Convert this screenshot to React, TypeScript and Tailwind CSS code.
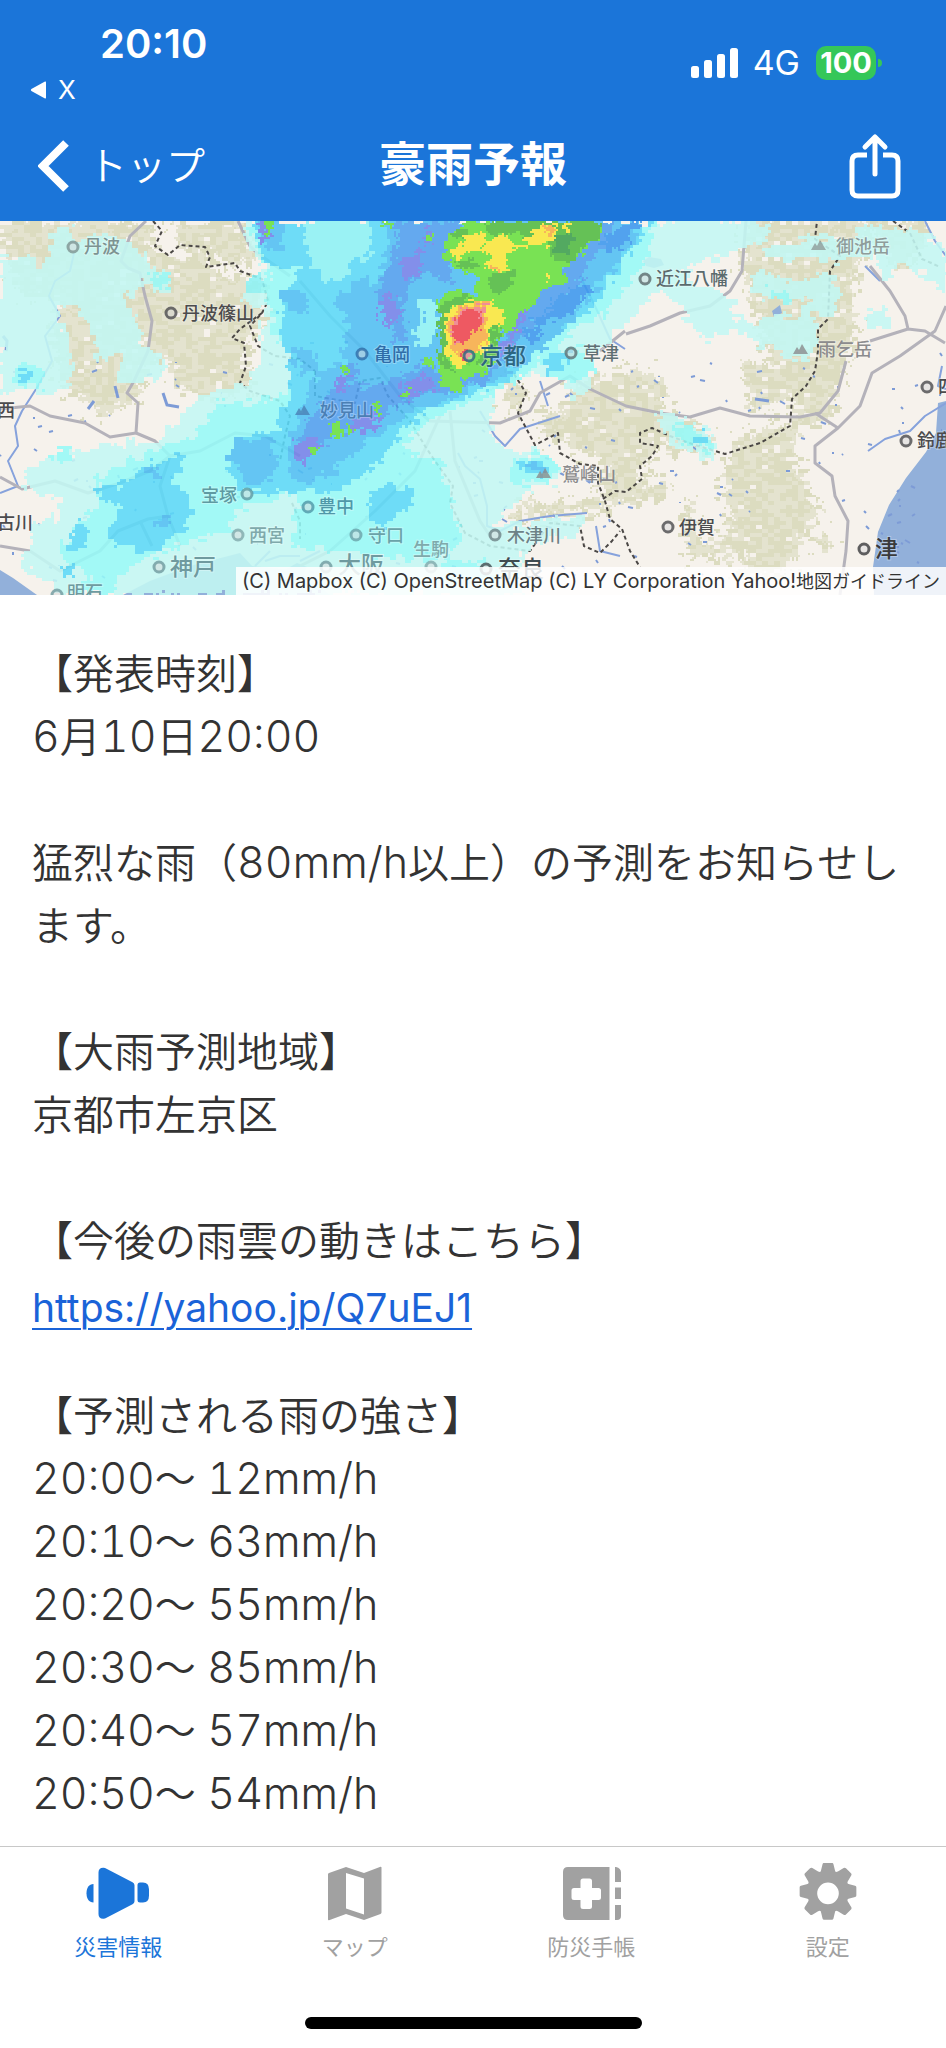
import type { ReactNode } from 'react'

type Point = [number, number]
type Layer = { color: string; shapes: string[] }

const MAP_W = 946
const MAP_H = 374

const forecast = [
  { time: '20:00', amount: '12mm/h' },
  { time: '20:10', amount: '63mm/h' },
  { time: '20:20', amount: '55mm/h' },
  { time: '20:30', amount: '85mm/h' },
  { time: '20:40', amount: '57mm/h' },
  { time: '20:50', amount: '54mm/h' },
]

// Outlines are "x,y x,y ..." in map coordinates
const forest: string[] = [
  '0,0 140,0 155,10 150,25 175,40 205,28 215,50 262,62 265,100 245,120 250,165 215,178 170,165 175,135 150,140 140,175 100,195 60,160 50,110 60,80 20,70 0,30',
  '170,0 240,0 262,38 235,50 210,30 180,28',
  '745,0 870,0 856,60 856,110 840,160 830,200 800,205 790,170 770,140 755,100 745,60',
  '870,0 925,0 930,25 895,50 880,20',
  '626,150 660,150 665,185 715,215 700,235 655,225 640,260 626,275 600,270',
  '570,165 600,155 626,150 640,200 626,240 600,240 570,225 545,215 540,195 565,190',
  '505,300 525,280 560,285 600,275 640,262 680,262 660,276 600,290 550,297',
  '505,150 520,160 530,175 515,190 500,180',
  '735,220 800,195 795,240 820,290 785,350 740,360 745,330 720,345 730,300 722,255',
  '682,285 690,280 700,320 720,310 715,335 690,335',
  '740,140 790,150 785,185 750,190',
  '820,310 832,318 828,332 818,325',
]

const rain: Layer[] = [
  {
    color: '#c4f8f4',
    shapes: [
      '0,37 30,35 45,50 50,20 65,8 70,2 75,20 120,15 145,30 150,45 175,60 165,70 140,60 135,75 120,70 135,95 140,120 165,140 155,160 120,165 115,150 125,135 100,140 90,110 75,85 60,90 65,110 70,130 75,160 50,175 25,170 0,175',
      '240,0 250,25 262,45 265,60 240,75 255,85 270,85 260,105 260,135 245,165 200,172 175,200 160,220 120,222 50,235 25,250 22,265 45,275 60,280 55,300 35,305 30,330 20,345 50,360 60,374 520,374 523,330 540,318 577,314 587,294 545,300 490,307 507,294 523,272 560,260 557,234 510,227 490,215 490,190 497,174 507,157 560,150 575,180 590,160 580,140 607,121 630,97 700,42 765,20 765,0',
      '660,30 690,60 725,75 735,85 730,95 765,105 755,115 710,108 715,120 705,120 690,105 680,80 650,66',
      '765,30 800,18 850,15 870,5 900,5 930,15 946,25 946,68 925,55 900,40 885,60 870,35 850,40 800,40 765,35',
      '745,55 765,50 790,60 830,50 840,70 830,95 815,90 812,100 820,120 812,135 795,142 770,125 755,125 755,105 770,95 800,95 810,75 790,80 760,75',
      '655,190 680,195 715,215 717,240 708,243 700,230 670,222',
      '868,90 885,85 888,105 870,112',
    ],
  },
  {
    color: '#97faf8',
    shapes: [
      '245,0 262,38 272,55 262,70 275,90 268,115 300,135 290,170 250,182 215,182 195,215 150,232 100,255 95,285 75,305 60,330 70,350 90,345 80,374 110,374 130,345 180,325 230,310 240,290 300,270 310,300 400,290 440,260 430,240 400,225 415,210 440,195 470,180 510,165 540,140 570,115 600,95 625,70 640,50 650,30 655,0',
      '10,145 30,140 45,150 42,166 15,162',
      '145,50 170,55 168,66 150,60',
      '48,232 72,228 70,240 55,243',
      '515,234 555,234 560,250 545,264 512,260',
      '300,262 440,240 450,268 462,318 430,340 385,335 330,330 290,325',
      '770,65 790,70 785,80 770,78',
      '535,130 580,128 595,150 575,160 550,152',
      '670,205 690,205 712,220 714,238 700,225 675,220',
      '440,335 480,340 500,360 450,362',
    ],
  },
  {
    color: '#5cdaf9',
    shapes: [
      '155,240 185,230 180,250 175,265 195,285 193,300 175,315 165,325 140,330 110,325 115,300 122,290 95,270 100,262 120,265 140,248',
      '250,0 258,25 268,45 300,45 285,75 280,110 290,140 290,180 275,195 285,212 240,215 225,240 235,265 270,275 300,268 340,270 360,255 385,235 400,210 430,190 470,175 510,160 530,135 560,110 590,90 610,60 630,30 655,0',
      '545,135 570,132 565,148 545,150',
      '520,240 545,240 548,256 525,256',
      '695,212 710,215 708,226 692,222',
      '80,300 90,310 84,326 70,330 68,315',
      '18,150 34,150 30,160 18,158',
      '370,268 385,262 412,270 410,285 395,292 388,308 372,300',
      '62,348 72,345 72,356 64,358',
    ],
  },
  {
    color: '#50bff4',
    shapes: [
      '258,0 285,0 285,20 278,32 262,20',
      '385,0 645,0 610,50 570,100 540,130 500,158 440,180 400,198 375,215 345,240 300,250 285,225 300,190 310,165 320,150 345,145 340,130 350,100 335,80 350,62 380,60 388,25',
      '280,66 300,70 312,85 295,92 282,80',
      '290,125 312,130 318,150 300,150',
      '236,220 270,218 277,235 270,258 250,265 240,250 225,240',
      '145,248 160,245 158,256 148,256',
      '155,300 172,298 165,310 154,306',
      '528,243 542,245 540,252 530,252',
      '285,220 320,240 340,250 310,262 290,255',
    ],
  },
  {
    color: '#8ef3f6',
    shapes: [
      '305,0 372,0 372,35 350,40 345,58 322,62 308,30',
      '420,75 438,82 440,108 425,125 412,118 422,100',
      '245,60 262,50 268,70 250,74',
    ],
  },
  {
    color: '#509ff0',
    shapes: [
      '395,0 460,0 445,40 455,50 445,65 430,50 410,62 400,90 408,118 396,122 388,100 378,72 395,30',
      '590,0 615,0 605,22 585,45 580,60 562,80 530,105 510,135 490,150 510,95 545,60 575,30',
      '335,165 375,165 400,155 430,140 440,158 500,145 485,162 440,170 395,186 345,210 310,228 292,226 300,212',
      '340,145 355,140 360,155 345,160',
    ],
  },
  {
    color: '#3c98ef',
    shapes: ['532,100 560,78 582,62 590,70 565,95 545,105', '525,108 545,104 530,122', '600,30 612,12 630,0 640,0 622,30'],
  },
  {
    color: '#7482ea',
    shapes: [
      '380,82 390,74 400,90 392,108 382,100',
      '402,38 425,30 420,52 405,60',
      '422,12 432,8 430,24 422,24',
      '332,158 350,150 348,168 336,170',
      '400,165 430,152 438,166 408,180',
      '350,200 382,190 374,210 352,210',
      '290,226 310,214 322,225 300,244',
      '515,88 528,84 520,112 502,136 496,128 508,112',
      '258,0 268,0 275,20 264,22',
    ],
  },
  {
    color: '#68e040',
    shapes: [
      '447,11 470,0 605,0 603,14 587,24 577,41 560,44 568,61 540,71 530,91 523,84 517,107 500,112 497,137 483,154 463,157 462,171 443,164 438,151 438,134 444,111 438,81 450,69 477,74 477,54 457,47 443,37',
      '264,0 272,0 276,10 270,14 265,8',
      '308,224 314,224 318,232 312,234',
      '330,204 340,198 342,216 332,218',
      '346,206 352,202 352,214 346,214',
      '374,184 382,182 380,192 376,192',
      '403,172 411,166 408,178 402,178',
      '426,138 434,136 432,146 426,146',
      '310,212 316,218 310,220',
      '426,10 434,14 432,20 426,16',
      '382,0 396,0 392,6 384,5',
      '340,144 350,148 344,152',
    ],
  },
  {
    color: '#52bb42',
    shapes: [
      '488,0 605,0 600,14 585,24 575,41 552,38 550,18 530,22 520,10 500,14 488,10',
      '440,84 462,74 480,76 460,84 446,92 446,140 455,150 442,146 438,120',
      '488,108 500,104 496,132 484,146 476,142 488,126',
      '447,12 465,5 470,12 455,18',
      '455,38 480,40 480,50 460,46',
      '490,54 515,48 512,64 500,72 488,66',
    ],
  },
  {
    color: '#3d9f4e',
    shapes: ['552,14 575,12 568,36 556,32'],
  },
  {
    color: '#fae73c',
    shapes: [
      '462,14 485,14 485,25 470,30 455,38 453,28 463,24',
      '488,18 506,14 520,26 508,34 508,48 490,52 485,46 492,36 480,32',
      '523,17 540,6 556,2 556,15 545,25 525,25',
      '562,2 571,2 570,10 564,12',
      '544,52 551,54 548,60',
      '446,92 465,82 490,80 503,88 502,102 488,105 487,130 470,132 460,147 455,146 444,130 446,110',
    ],
  },
  {
    color: '#f8ad48',
    shapes: [
      '450,97 465,84 487,82 485,102 486,120 476,130 460,134 450,126 449,110',
      '488,46 500,44 498,50 488,50',
      '545,6 554,4 552,14 546,14',
    ],
  },
  { color: '#f0808c', shapes: ['456,96 466,86 488,84 482,104 468,116 462,126 451,124 453,106'] },
  { color: '#ee4550', shapes: ['458,96 470,87 481,94 481,106 471,114 462,125 452,122 455,106', '463,130 470,128 472,136 462,138'] },
]

const roads = [
  'M146 0L130 15 121 40 128 47 140 52 145 75 152 100 148 130 134 160 127 172 138 182 136 212 110 216 85 202 50 195 30 185 0 188',
  'M136 212L155 220 170 235 200 230 235 212 265 215 300 235',
  'M0 256L22 268 55 260 88 272 120 262 150 250 170 235 160 265 168 295',
  'M168 295L148 298 118 310 100 330 60 350 30 330 0 325',
  'M140 300L152 325 M168 295L180 325',
  'M238 0L250 25 256 31 290 55',
  'M300 60L330 95 365 130 400 175 430 200 500 202 530 190 540 172 570 155 590 168 626 185 660 192 690 196 720 187 750 195 800 196 820 192 838 170 846 140',
  'M626 113L650 105 680 92 710 85 730 70 742 50 744 25 746 0',
  'M600 130L625 110 M450 190L455 240 480 300 490 315',
  'M440 195L415 250 375 290 330 330 300 345',
  'M870 45L890 70 905 95 908 108 870 120 M908 108L925 110 945 122 M946 85L935 110 900 135 872 152 860 185 838 207 815 225 815 242 832 255 835 275 848 300 846 330 840 374',
  'M815 192L838 207',
]

const rivers = [
  'M74 32L70 50 55 60 49 75 60 95 45 115 52 140 38 165 22 190 15 205 18 225 8 240 18 265 0 272',
  'M480 190L495 215 505 225 520 208 560 195',
  'M458 232L465 245 480 258 487 285 487 305 500 310 520 300 550 295 587 292',
  'M580 55L595 85 610 118 625 128',
  'M540 160L548 185',
  'M868 230L885 218 910 210 925 195 946 182',
  'M865 45L880 60 M925 0L935 20 946 35',
  'M265 340L280 335 300 335 M255 345L270 330 M300 340L320 330',
  'M596 305L600 330 620 335 M942 145L938 165 946 168',
]

const borders = [
  'M153 0L162 10 155 25 168 34 180 24 205 26 210 36 206 46 235 42 240 50 262 58 268 80 262 92 250 105 258 125 275 135 300 138 315 150',
  'M262 92L240 108 232 117 244 122 246 145 240 162 250 170 280 180 290 195 285 215 280 240',
  'M315 150L315 175 355 182 360 160 380 157 388 175 410 200 425 225 435 240 453 265 450 282 465 312 490 325 530 330 550 302 580 305 584 325 600 332 612 320 620 310',
  'M514 153L526 172 518 192 535 224 558 212 560 232 580 243 598 245 598 262 605 280 610 298 622 308 630 330 640 346',
  'M603 278L615 270 626 271 642 258 640 245 652 235 658 225 640 222 640 212 652 207 670 215 695 224 725 233 760 222 790 205 792 178 806 165 815 150 818 130 818 108 828 98 830 50 840 35 815 18 817 0',
  'M893 0L910 12 922 38 940 46',
  'M292 282L300 300 300 318',
]

type Place = {
  x: number
  y: number
  name: string
  size?: number
  tone?: string
  mark?: [number, number]
  peak?: [number, number]
}

const places: Place[] = [
  { x: 84, y: 32, name: '丹波', tone: '#7d9391', mark: [73, 26] },
  { x: 182, y: 99, name: '丹波篠山', tone: '#4b4b4d', mark: [171, 92] },
  { x: -3, y: 196, name: '西', tone: '#4b4b4d' },
  { x: -3, y: 308, name: '古川', tone: '#4b4b4d' },
  { x: 201, y: 281, name: '宝塚', tone: '#5e9aa2', mark: [247, 273] },
  { x: 249, y: 321, name: '西宮', tone: '#7fa9ab', mark: [238, 314] },
  { x: 170, y: 354, name: '神戸', tone: '#6f9a9f', size: 23, mark: [159, 346] },
  { x: 67, y: 378, name: '明石', tone: '#6f9a9f', mark: [57, 374] },
  { x: 374, y: 140, name: '亀岡', tone: '#2f6da8', mark: [362, 133] },
  { x: 480, y: 143, name: '京都', tone: '#2d6682', size: 23, mark: [469, 135] },
  { x: 320, y: 196, name: '妙見山', tone: '#4a7fb4', peak: [302, 189] },
  { x: 583, y: 139, name: '草津', tone: '#5f7074', mark: [571, 132] },
  { x: 562, y: 260, name: '鷲峰山', tone: '#8b8b8d', peak: [543, 252] },
  { x: 318, y: 292, name: '豊中', tone: '#4f97a8', mark: [308, 286] },
  { x: 368, y: 321, name: '守口', tone: '#6aa3a9', mark: [356, 314] },
  { x: 413, y: 335, name: '生駒', tone: '#7fa9ab', mark: [431, 346] },
  { x: 507, y: 321, name: '木津川', tone: '#6d8286', mark: [495, 314] },
  { x: 338, y: 352, name: '大阪', tone: '#6f9a9f', size: 23, mark: [326, 346] },
  { x: 498, y: 356, name: '奈良', tone: '#3f4b50', size: 23, mark: [486, 348] },
  { x: 656, y: 64, name: '近江八幡', tone: '#5b6a6d', mark: [645, 58] },
  { x: 836, y: 32, name: '御池岳', tone: '#8f9c9a', peak: [818, 24] },
  { x: 818, y: 135, name: '雨乞岳', tone: '#8b8b8d', peak: [800, 128] },
  { x: 938, y: 172, name: '四日市', tone: '#4b4b4d', mark: [927, 166] },
  { x: 917, y: 226, name: '鈴鹿', tone: '#4b4b4d', mark: [906, 220] },
  { x: 679, y: 313, name: '伊賀', tone: '#4b4b4d', mark: [668, 306] },
  { x: 875, y: 336, name: '津', tone: '#3a3a3c', size: 23, mark: [864, 328] },
]

function hash(x: number, y: number) {
  const n = Math.sin(x * 127.1 + y * 311.7) * 43758.5453
  return n - Math.floor(n)
}

function inside(x: number, y: number, poly: Point[]) {
  let hit = false
  for (let i = 0, j = poly.length - 1; i < poly.length; j = i++) {
    const [xi, yi] = poly[i]
    const [xj, yj] = poly[j]
    if (yi > y !== yj > y && x < ((xj - xi) * (y - yi)) / (yj - yi) + xi) hit = !hit
  }
  return hit
}

// Turns smooth outlines into one path of square cells with a ragged edge
function rasterize(shapes: string[], cell: number, rough: number, drop = 0) {
  const polys = shapes.map((s) => s.split(' ').map((p) => p.split(',').map(Number) as Point))
  let d = ''
  for (let y = 0; y < MAP_H; y += cell) {
    let start = -1
    for (let x = 0; x <= MAP_W + cell; x += cell) {
      const bx = Math.floor(x / (cell * 3))
      const by = Math.floor(y / (cell * 2))
      const sx = x + cell / 2 + (hash(bx, by) - 0.5) * rough + (hash(x, y) - 0.5) * rough * 0.3
      const sy = y + cell / 2 + (hash(by + 50, bx) - 0.5) * rough + (hash(y, x) - 0.5) * rough * 0.3
      const on = x <= MAP_W && hash(bx + 9, by + 4) >= drop && polys.some((p) => inside(sx, sy, p))
      if (on && start < 0) start = x
      if (!on && start >= 0) {
        d += `M${start} ${y}h${x - start}v${cell}h${start - x}z`
        start = -1
      }
    }
  }
  return d
}

const forestPath = rasterize(forest, 2, 12, 0.04)
const forestShade = rasterize(forest, 2, 24, 0.45)
const rainPaths = rain.map((layer, i) => ({
  color: layer.color,
  d: rasterize(layer.shapes, i < 5 ? 3 : 2, i < 8 ? 9 : 6),
}))

const ponds = Array.from({ length: 200 }, (_, i) => {
  const x = Math.round(hash(i, 3) * MAP_W)
  const y = Math.round(120 + hash(i, 7) * 240)
  return `M${x} ${y}l${Math.round(hash(i, 1) * 5)} ${Math.round(hash(i, 2) * 5 - 2)}`
}).join('')

function RainMap() {
  return (
    <svg viewBox={`0 0 ${MAP_W} ${MAP_H}`} className="block h-auto w-full" role="img" aria-label="雨雲レーダー">
      <rect width={MAP_W} height={MAP_H} fill="#f6f2ec" />
      <path d={forestPath} fill="#e4e3cf" />
      <path d={forestShade} fill="#dcdcc0" />
      <g fill="#92b0da">
        <path d="M946 180L938 182 936 212 926 231 906 257 889 284 878 311 873 346 874 374H946z" />
        <path d="M0 349L13 357 37 374H0z" />
        <path d="M123 374L150 360 190 345 240 332 252 345 300 350 330 374z" />
        <path d="M643 40l6-4 12 2 3 6-10 3-8-2zM772 90l8-6 2 8-8 4zM283 350l14-8 10 4-6 10z" />
      </g>
      <path d={ponds} stroke="#7d9bd6" strokeWidth="2" fill="none" />
      <path d="M3 115l4 5-1 10 M163 172l4 12 12 2 M88 188l6-8 M115 165l3 12 M755 178l14 2" stroke="#7d9bd6" strokeWidth="3" fill="none" />
      <g fill="none" strokeLinejoin="round">
        {rivers.map((d) => (
          <path key={d} d={d} stroke="#86a2dc" strokeWidth="2" />
        ))}
        {roads.map((d) => (
          <path key={d} d={d} stroke="#b4b2ba" strokeWidth="3" />
        ))}
        {borders.map((d) => (
          <path key={d} d={d} stroke="#4a4745" strokeWidth="2" strokeDasharray="4 3" />
        ))}
      </g>
      <g opacity="0.88" shapeRendering="crispEdges">
        {rainPaths.map((p) => (
          <path key={p.color} d={p.d} fill={p.color} />
        ))}
      </g>
      {places.map((p) => (
        <g key={p.name}>
          {p.mark && (
            <circle cx={p.mark[0]} cy={p.mark[1]} r="5" fill="#d8d8da" fillOpacity="0.5" stroke={p.tone} strokeWidth="3" strokeOpacity="0.8" />
          )}
          {p.peak && (
            <path d={`M${p.peak[0] - 7} ${p.peak[1] + 5}l4-7 2 3 3-6 6 10z`} fill={p.tone} fillOpacity="0.8" />
          )}
          <text
            x={p.x}
            y={p.y}
            fontSize={p.size ?? 18}
            fill={p.tone}
            stroke="#ffffff"
            strokeOpacity="0.3"
            strokeWidth="2"
            paintOrder="stroke"
            className="font-['Noto_Sans_CJK_JP',sans-serif] font-medium"
          >
            {p.name}
          </text>
        </g>
      ))}
    </svg>
  )
}

function StatusBar() {
  return (
    <div className="flex h-[110px] items-start justify-between pr-16 pl-[30px]">
      <div className="pt-5">
        <div className="pl-[70px] text-[40px] leading-12 font-semibold">20:10</div>
        <button className="flex items-center gap-[10px] text-[26px] leading-11">
          <svg viewBox="0 0 18 18" className="size-[18px]" fill="currentColor" aria-hidden="true">
            <path d="M16 1.2v15.6q0 .9-1 .6L1.400 10q-1.200-1 0-2L15 .6q1-.3 1 .6z" />
          </svg>
          X
        </button>
      </div>
      <div className="flex items-center pt-[46px]">
        <svg viewBox="0 0 48 32" className="h-8 w-12" fill="currentColor" aria-hidden="true">
          <rect x="0" y="19" width="8" height="12" rx="2.500" />
          <rect x="13" y="13" width="8" height="18" rx="2.500" />
          <rect x="26" y="7" width="8" height="24" rx="2.500" />
          <rect x="39" y="1" width="8" height="30" rx="2.500" />
        </svg>
        <span className="ml-[14px] text-[34px] leading-8">4G</span>
        <span className="ml-4 flex h-[34px] w-[60px] items-center justify-center rounded-[10px] bg-[#35c759] text-[29px] leading-8 font-bold">
          100
        </span>
        <span className="ml-[2px] h-2 w-1 rounded-r-full bg-[#35c759]" />
      </div>
    </div>
  )
}

function NavBar() {
  return (
    <div className="grid h-[111px] grid-cols-[1fr_auto_1fr] items-center px-[38px]">
      <button className="flex items-center gap-[19px] justify-self-start text-[39px] leading-14 font-[350]">
        <svg viewBox="0 0 31 52" className="h-[52px] w-[31px]" fill="none" stroke="currentColor" strokeWidth="8" aria-hidden="true">
          <path d="M28 3L5 26l23 23" />
        </svg>
        トップ
      </button>
      <h1 className="pb-1 text-[47px] leading-14 font-bold">豪雨予報</h1>
      <button aria-label="共有" className="justify-self-end pr-[7px]">
        <svg viewBox="0 0 52 66" className="h-[66px] w-[52px]" fill="none" stroke="currentColor" strokeWidth="5" strokeLinecap="round" strokeLinejoin="round" aria-hidden="true">
          <path d="M18 22H9q-6 0-6 6v29q0 6 6 6h34q6 0 6-6V28q0-6-6-6h-9" strokeLinecap="butt" />
          <path d="M26 41V5M16 14L26 4l10 10" />
        </svg>
      </button>
    </div>
  )
}

function Tab({ label, active, children }: { label: string; active?: boolean; children: ReactNode }) {
  return (
    <button
      aria-current={active ? 'page' : undefined}
      className={`flex flex-1 flex-col items-center gap-2 ${active ? 'text-[#1b75d9]' : 'text-[#a1a1a1]'}`}
    >
      <svg viewBox="0 0 64 60" className="h-[60px] w-16" fill="currentColor" aria-hidden="true">
        {children}
      </svg>
      <span className="text-[22px] leading-8">{label}</span>
    </button>
  )
}

function TabBar() {
  return (
    <nav className="border-t border-[#c8c8c8] bg-white pt-4">
      <div className="flex">
        <Tab label="災害情報" active>
          <path d="M7.500 21v18.500C3 39.500.5 35.500.5 30.200S3 21 7.500 21z" />
          <path d="M12.500 9.500q0-5 5-4.800 1.500.1 3 1l26 13.500q2 1 2 3v16q0 2-2 3l-26 13.500q-1.500.9-3 1-5 .2-5-4.800z" />
          <path d="M51.500 22q0-2.500 2.500-2.500h3q6 0 6 7v6q0 7-6 7h-3q-2.500 0-2.500-2.500z" />
        </Tab>
        <Tab label="マップ">
          <path fillRule="evenodd" d="M5 11.500q0-1 1-1.400L23 4l18 6L57.500 3.700q1-.2 1 .8v45q0 1-1 1.400L41 57l-18-6L6 57.200q-1 .2-1-.8zM23 10v35.500l18 6V15.500z" />
        </Tab>
        <Tab label="防災手帳">
          <path
            fillRule="evenodd"
            d="M9 4h41.500v53H9q-5 0-5-5V9q0-5 5-5zM24 15.500q-2.500 0-2.500 2.500v7H15q-2.500 0-2.500 2.500v7q0 2.500 2.500 2.500h6.500v6.500q0 2.500 2.500 2.500h6.500q2.500 0 2.500-2.500V37h6.500q2.500 0 2.500-2.500v-7q0-2.500-2.500-2.500H33v-7q0-2.500-2.500-2.500z"
          />
          <path d="M56 4h1q5 1 5 5.500V19h-6zM56 24.500h6V36h-6zM56 42h6v11q0 4-4 4h-2z" />
        </Tab>
        <Tab label="設定">
          <path
            fillRule="evenodd"
            transform="translate(32 30) scale(1.05) translate(-32 -30)"
            d="M26.800 2.500q.3-1.200 1.500-1.200h7.400q1.200 0 1.500 1.200l1.600 6.600q.4 1.400 2.600.4l5.500-3.300q1.200-.7 2.200.2l4.800 4.800q.9 1 .2 2.200l-3.200 5.300q-1 2.200.6 2.700l6.300 1.600q1.200.3 1.200 1.500v7.800q0 1.200-1.200 1.500l-6.300 1.600q-1.600.5-.6 2.700l3.200 5.300q.7 1.200-.2 2.200l-4.800 4.800q-1 .9-2.200.2l-5.500-3.300q-2.200-1-2.600.4l-1.600 6.600q-.3 1.200-1.500 1.200h-7.400q-1.200 0-1.500-1.200l-1.600-6.600q-.4-1.400-2.600-.4l-5.500 3.300q-1.200.7-2.200-.2l-4.800-4.800q-.9-1-.2-2.200l3.200-5.300q1-2.200-.6-2.700l-6.300-1.600q-1.200-.3-1.200-1.500v-7.800q0-1.200 1.200-1.500l6.300-1.600q1.600-.5.6-2.700l-3.200-5.300q-.7-1.200.2-2.200l4.800-4.800q1-.9 2.200-.2l5.500 3.300q2.200 1 2.600-.4zM32 20a10.300 10.300 0 1 0 0 20.600A10.300 10.300 0 1 0 32 20z"
          />
        </Tab>
      </div>
      <div className="mx-auto mt-[54px] mb-[19px] h-3 w-[337px] rounded-full bg-black" />
    </nav>
  )
}

// Latin letters and digits run a size larger than the kana and kanji around them
function Latin({ children }: { children: ReactNode }) {
  return <span className="text-[43px] leading-none tabular-nums">{children}</span>
}

export default function App() {
  return (
    <div
      lang="ja"
      className="flex min-h-screen flex-col bg-white font-['Inter','Noto_Sans_CJK_JP',sans-serif] text-[#333333]"
    >
      <header className="bg-[#1b75d9] text-white">
        <StatusBar />
        <NavBar />
      </header>

      <div className="relative">
        <RainMap />
        <a
          href="#guideline"
          className="absolute right-0 bottom-0 bg-white/85 px-[6px] text-[20px] leading-7 whitespace-nowrap text-[#333333]"
        >
          (C) Mapbox (C) OpenStreetMap (C) LY Corporation Yahoo!
          <span className="text-[18px] leading-none">地図ガイドライン</span>
        </a>
      </div>

      <main className="flex-1 px-8 pt-12 text-[41px] leading-[63px] font-[350]">
        <section className="mb-[63px]">
          <h2>【発表時刻】</h2>
          <p>
            <Latin>6</Latin>月<Latin>10</Latin>日<Latin>20:00</Latin>
          </p>
        </section>
        <p className="mb-[63px]">
          猛烈な雨（<Latin>80mm/h</Latin>以上）の予測をお知らせします。
        </p>
        <section className="mb-[63px]">
          <h2>【大雨予測地域】</h2>
          <p>京都市左京区</p>
        </section>
        <section className="mb-[42px]">
          <h2>【今後の雨雲の動きはこちら】</h2>
          <a
            href="https://yahoo.jp/Q7uEJ1"
            className="block w-fit text-[39px] leading-[70px] font-normal text-[#1a63d8] underline decoration-2 underline-offset-6"
          >
            https://yahoo.jp/Q7uEJ1
          </a>
        </section>
        <section>
          <h2>【予測される雨の強さ】</h2>
          <ul>
            {forecast.map((row) => (
              <li key={row.time}>
                <Latin>{row.time}</Latin>〜 <Latin>{row.amount}</Latin>
              </li>
            ))}
          </ul>
        </section>
      </main>

      <TabBar />
    </div>
  )
}
